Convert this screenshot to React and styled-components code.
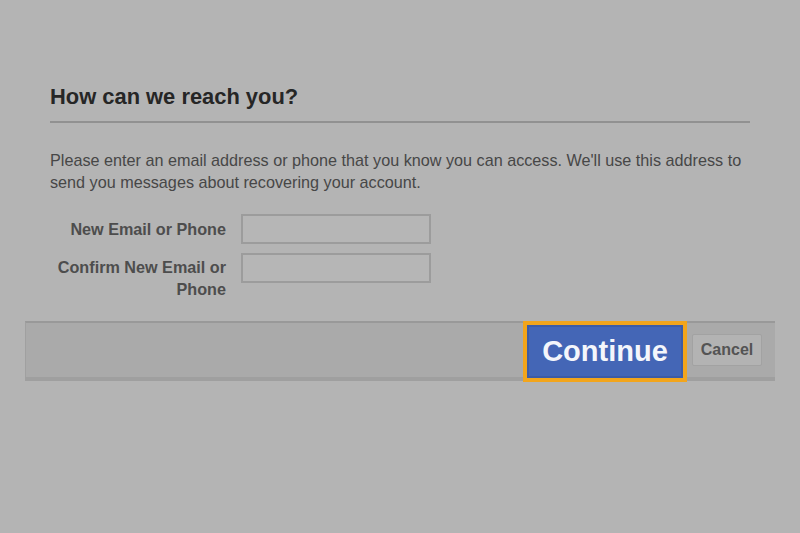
import React from "react";
import styled, { createGlobalStyle } from "styled-components";

const GlobalStyle = createGlobalStyle`
  html, body {
    margin: 0;
    padding: 0;
    background: #b4b4b4;
    font-family: "Liberation Sans", Arial, sans-serif;
  }
`;

const Page = styled.div`
  width: 800px;
  height: 533px;
  padding-top: 85px;
  box-sizing: border-box;
  overflow: hidden;
`;

const Dialog = styled.section`
  width: 750px;
  margin-left: 25px;
`;

const Body = styled.div`
  padding: 0 25px;
`;

const Title = styled.h2`
  margin: 0;
  font-size: 21.9px;
  line-height: 24px;
  font-weight: bold;
  color: #262626;
  padding-bottom: 12px;
  border-bottom: 2px solid #919191;
`;

const Intro = styled.p`
  margin: 26px 0 0;
  font-size: 16.2px;
  line-height: 22px;
  color: #474747;
`;

const Form = styled.div`
  margin-top: 21px;
  display: flex;
  flex-direction: column;
  gap: 9px;
`;

const Row = styled.div`
  display: flex;
  align-items: ${(p) => (p.top ? "flex-start" : "center")};
  gap: 15px;
`;

const Label = styled.label`
  width: 176px;
  text-align: right;
  font-size: 16.2px;
  line-height: 22px;
  font-weight: bold;
  color: #4d4d4d;
  padding-top: ${(p) => (p.top ? "3px" : "0")};
`;

const Field = styled.input`
  width: 190px;
  height: 30px;
  box-sizing: border-box;
  border: 2px solid #9c9c9c;
  background: #b6b6b6;
  outline: none;
`;

const Footer = styled.div`
  margin-top: 21px;
  height: 60px;
  box-sizing: border-box;
  background: #aaaaaa;
  border-top: 2px solid #999999;
  border-bottom: 4px solid #9f9f9f;
  border-left: 1px solid #a0a0a0;
  display: flex;
  justify-content: flex-end;
  align-items: center;
  gap: 5px;
  padding-right: 13px;
`;

const PrimaryButton = styled.button`
  width: 164px;
  height: 61px;
  box-sizing: border-box;
  border: 4px solid #f2a51c;
  background: #4466b6;
  box-shadow: inset 0 0 0 2px #3d5ca6;
  color: #f4f6fb;
  font-family: "Liberation Sans", Arial, sans-serif;
  font-size: 29px;
  font-weight: bold;
  padding: 0;
  margin-top: 3px;
`;

const SecondaryButton = styled.button`
  width: 70px;
  height: 32px;
  box-sizing: border-box;
  border: 1px solid #a2a2a2;
  border-radius: 2px;
  background: #b3b3b3;
  color: #545454;
  font-family: "Liberation Sans", Arial, sans-serif;
  font-size: 16px;
  font-weight: bold;
  padding: 0;
`;

export default function App() {
  return (
    <>
      <GlobalStyle />
      <Page>
        <Dialog>
          <Body>
            <Title>How can we reach you?</Title>
            <Intro>
              Please enter an email address or phone that you know you can
              access. We'll use this address to send you messages about
              recovering your account.
            </Intro>
            <Form>
              <Row>
                <Label>New Email or Phone</Label>
                <Field type="text" />
              </Row>
              <Row top>
                <Label top>Confirm New Email or Phone</Label>
                <Field type="text" />
              </Row>
            </Form>
          </Body>
          <Footer>
            <PrimaryButton>Continue</PrimaryButton>
            <SecondaryButton>Cancel</SecondaryButton>
          </Footer>
        </Dialog>
      </Page>
    </>
  );
}
